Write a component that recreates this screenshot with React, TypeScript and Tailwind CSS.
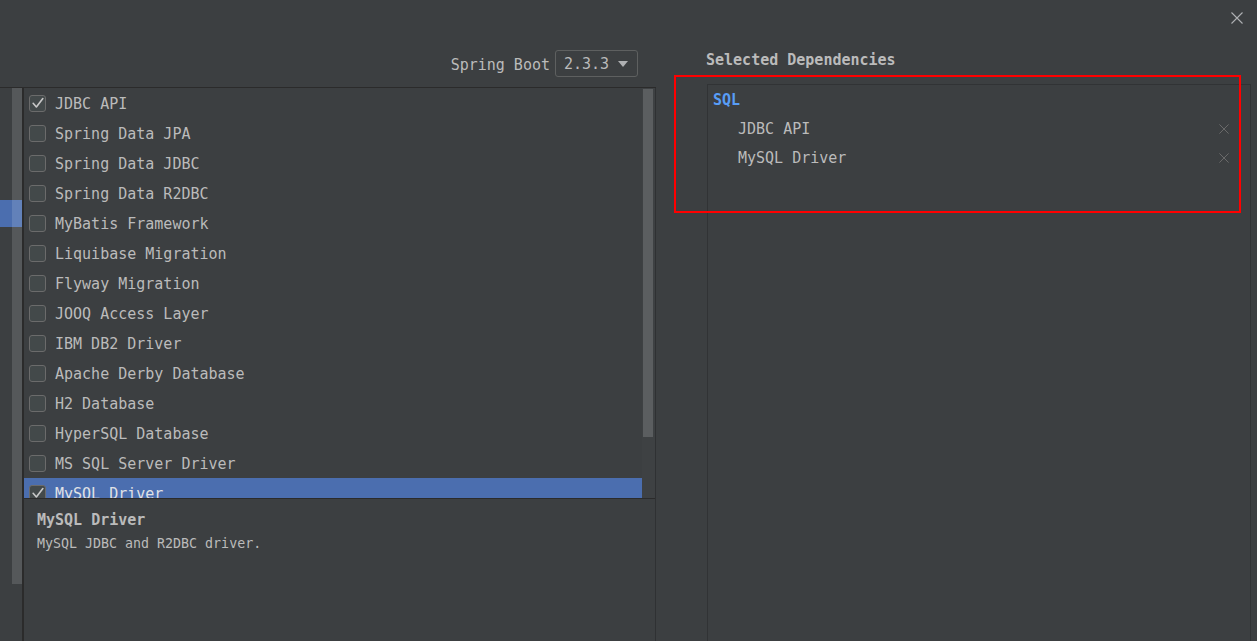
const deps = [
  { name: 'JDBC API', checked: true },
  { name: 'Spring Data JPA', checked: false },
  { name: 'Spring Data JDBC', checked: false },
  { name: 'Spring Data R2DBC', checked: false },
  { name: 'MyBatis Framework', checked: false },
  { name: 'Liquibase Migration', checked: false },
  { name: 'Flyway Migration', checked: false },
  { name: 'JOOQ Access Layer', checked: false },
  { name: 'IBM DB2 Driver', checked: false },
  { name: 'Apache Derby Database', checked: false },
  { name: 'H2 Database', checked: false },
  { name: 'HyperSQL Database', checked: false },
  { name: 'MS SQL Server Driver', checked: false },
  { name: 'MySQL Driver', checked: true, selected: true },
];

function Checkbox({ checked }: { checked: boolean }) {
  return (
    <div className="w-[17px] h-[17px] shrink-0 rounded-[3px] border border-[#6b6b6b] bg-[#43494a] flex items-center justify-center">
      {checked && (
        <svg width="14" height="14" viewBox="0 0 13 13" fill="none">
          <path d="M2 6.8 L5 10.2 L11 2.4" stroke="#c8c8c8" strokeWidth="1.5" strokeLinecap="round" strokeLinejoin="round" />
        </svg>
      )}
    </div>
  );
}

function CloseIcon({ size, color }: { size: number; color: string }) {
  return (
    <svg width={size} height={size} viewBox="0 0 12 12" fill="none">
      <path d="M0.5 0.5 L11.5 11.5 M11.5 0.5 L0.5 11.5" stroke={color} strokeWidth="1.1" />
    </svg>
  );
}

export default function App() {
  return (
    <div className="relative w-[1257px] h-[641px] overflow-hidden bg-[#3c3f41] text-[#bbbbbb] font-['DejaVu_Sans_Mono','Liberation_Mono',monospace] text-[15px] flex">
      {/* left side: dependency list */}
      <div className="w-[656px] flex flex-col">
        <div className="h-[88px] shrink-0 border-b border-[#2b2b2b] flex justify-end items-start pt-[50px] pr-[18px] gap-[5px]">
          <span className="leading-[27px] pt-[2px]">Spring Boot</span>
          <div className="w-[83px] h-[27px] border border-[#5e6060] rounded-[3px] flex items-center justify-between pl-[8px] pr-[9px]">
            <span className="leading-[25px] pt-[2px]">2.3.3</span>
            <svg width="10" height="6" viewBox="0 0 10 6">
              <path d="M0 0 L10 0 L5 6 Z" fill="#afb1b3" />
            </svg>
          </div>
        </div>

        <div className="flex-1 flex min-h-0">
          <div className="relative w-[24px] shrink-0 border-r-2 border-[#2b2b2b]">
            <div className="mt-[112px] h-[27px] bg-[#4b6eaf]" />
            <div className="absolute left-[12px] top-0 w-[10px] h-[496px] bg-white/[0.13]" />
          </div>

          <div className="flex-1 flex flex-col border-r border-[#2f3133]">
            <div className="h-[411px] shrink-0 border-b border-[#2b2b2b] flex overflow-hidden">
              <div className="flex-1 flex flex-col">
                {deps.map((d) => (
                  <div
                    key={d.name}
                    className={`h-[30px] shrink-0 flex items-center gap-[9px] pl-[5px] ${d.selected ? 'bg-[#4b6eaf] text-[#e0e2e6]' : ''}`}
                  >
                    <Checkbox checked={d.checked} />
                    <span className="whitespace-pre leading-[18px] pt-px">{d.name}</span>
                  </div>
                ))}
              </div>
              <div className="w-[13px] shrink-0 bg-[#3e4143] pt-px pl-px">
                <div className="w-[10px] h-[348px] bg-[#5b5e60]" />
              </div>
            </div>

            <div className="pl-[13px] pt-[12px]">
              <div className="font-bold leading-[18px]">MySQL Driver</div>
              <div className="mt-[7px] text-[13.3px] leading-[16px]">MySQL JDBC and R2DBC driver.</div>
            </div>
          </div>
        </div>
      </div>

      {/* right side: selected dependencies */}
      <div className="relative flex-1 flex flex-col">
        <div className="absolute top-[12px] right-[14px]">
          <CloseIcon size={12} color="#afb1b3" />
        </div>
        <div className="h-[84px] shrink-0 pl-[50px] pt-[51px] font-bold leading-[18px]">
          Selected Dependencies
        </div>
        <div className="flex-1 ml-[51px] mr-[6px] border-l border-t border-r border-[#313335]">
          <div className="h-[29px] flex items-center pl-[5px] pt-px font-bold text-[#589df6]">SQL</div>
          {['JDBC API', 'MySQL Driver'].map((n) => (
            <div key={n} className="h-[29px] flex items-center justify-between pl-[30px] pr-[21px]">
              <span className="pt-px">{n}</span>
              <CloseIcon size={10} color="#6e6e6e" />
            </div>
          ))}
        </div>
      </div>

      {/* red annotation frame */}
      <div className="absolute left-[674px] top-[75px] w-[567px] h-[138px] border-2 border-[#ff0000] pointer-events-none" />
    </div>
  );
}
